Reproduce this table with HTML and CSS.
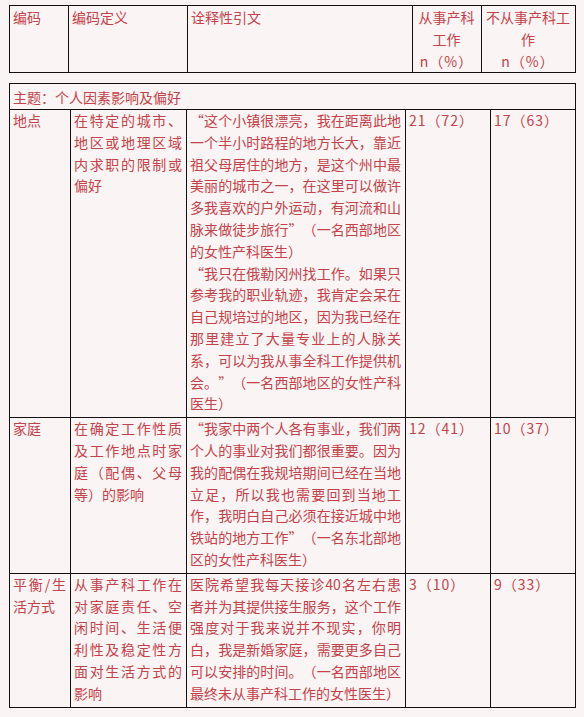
FILE: index.html
```html
<!DOCTYPE html>
<html lang="zh-CN">
<head>
<meta charset="utf-8">
<title>编码表</title>
<link rel="stylesheet" href="styles.css">
</head>
<body>
<table class="tbl tbl-head">
  <colgroup><col class="h1"><col class="h2"><col class="h3"><col class="h4"><col class="h5"></colgroup>
  <tr>
    <td>编码</td>
    <td>编码定义</td>
    <td>诠释性引文</td>
    <td class="center">从事产科工作<br><span class="num">n（%）</span></td>
    <td class="center">不从事产科工作<br><span class="num">n（%）</span></td>
  </tr>
</table>
<table class="tbl tbl-body">
  <colgroup><col class="b1"><col class="b2"><col class="b3"><col class="b4"><col class="b5"></colgroup>
  <tr><td colspan="5" class="topic">主题：个人因素影响及偏好</td></tr>
  <tr>
    <td>地点</td>
    <td>在特定的城市、地区或地理区域内求职的限制或偏好</td>
    <td><p>“这个小镇很漂亮，我在距离此地一个半小时路程的地方长大，靠近祖父母居住的地方，是这个州中最美丽的城市之一，在这里可以做许多我喜欢的户外运动，有河流和山脉来做徒步旅行”（一名西部地区的女性产科医生）</p><p>“我只在俄勒冈州找工作。如果只参考我的职业轨迹，我肯定会呆在自己规培过的地区，因为我已经在那里建立了大量专业上的人脉关系，可以为我从事全科工作提供机会。”（一名西部地区的女性产科医生）</p></td>
    <td class="num">21（72）</td>
    <td class="num">17（63）</td>
  </tr>
  <tr>
    <td>家庭</td>
    <td>在确定工作性质及工作地点时家庭（配偶、父母等）的影响</td>
    <td>“我家中两个人各有事业，我们两个人的事业对我们都很重要。因为我的配偶在我规培期间已经在当地立足，所以我也需要回到当地工作，我明白自己必须在接近城中地铁站的地方工作”（一名东北部地区的女性产科医生）</td>
    <td class="num">12（41）</td>
    <td class="num">10（37）</td>
  </tr>
  <tr>
    <td>平衡/生活方式</td>
    <td>从事产科工作在对家庭责任、空闲时间、生活便利性及稳定性方面对生活方式的影响</td>
    <td>医院希望我每天接诊40名左右患者并为其提供接生服务，这个工作强度对于我来说并不现实，你明白，我是新婚家庭，需要更多自己可以安排的时间。（一名西部地区最终未从事产科工作的女性医生）</td>
    <td class="num">3（10）</td>
    <td class="num">9（33）</td>
  </tr>
</table>
</body>
</html>
```
FILE: styles.css
```css
html, body {
  background: #faf4f4;
}
body {
  margin: 0;
  padding: 5px 9px 0 9px;
  font-family: "Noto Sans CJK SC", "Noto Sans", sans-serif;
  font-size: 14px;
  line-height: 22px;
  color: #c4424a;
  text-spacing-trim: space-all;
}
.tbl {
  width: 566px;
  table-layout: fixed;
  border-collapse: collapse;
  border-spacing: 0;
}
.tbl td {
  border: 1px solid #141010;
  vertical-align: top;
  padding: 0 4px 0 3px;
  text-align: justify;
  word-break: normal;
  text-spacing-trim: space-all;
}
.tbl p {
  margin: 0;
}
.tbl-head {
  margin-bottom: 10px;
}
.tbl-head td {
  height: 66px;
  padding-top: 0;
}
.tbl-head td.center {
  text-align: center;
}
.tbl-body td {
  line-height: 21.8px;
  padding-bottom: 2px;
}
.tbl .num {
  letter-spacing: 1px;
  text-align: left;
}
.tbl-head .num {
  text-align: center;
}
.h1 { width: 59px; }
.h2 { width: 119px; }
.h3 { width: 225px; }
.h4 { width: 69px; }
.h5 { width: 94px; }
.b1 { width: 61px; }
.b2 { width: 116px; }
.b3 { width: 219px; }
.b4 { width: 85px; }
.b5 { width: 85px; }
.tbl-body td.topic {
  line-height: 22px;
  padding-top: 2px;
  padding-bottom: 1px;
  text-align: left;
}
```
